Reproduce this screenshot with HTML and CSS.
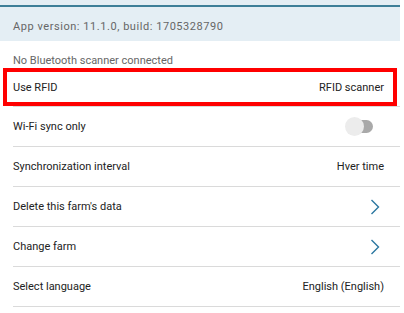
FILE: index.html
```html
<!DOCTYPE html>
<html lang="en">
<head>
  <meta charset="UTF-8" />
  <meta name="viewport" content="width=device-width, initial-scale=1.0"/>
  <title>Settings</title>
  <link rel="stylesheet" href="styles.css">
</head>
<body>
  <div class="top-strip"></div>
  <div class="version-bar">App version: 11.1.0, build: 1705328790</div>
  <div class="scanner-note">No Bluetooth scanner connected</div>

  <div class="settings-list">
    <div class="setting-row highlighted">
      <span>Use RFID</span>
      <span class="value">RFID scanner</span>
    </div>
    <div class="setting-row">
      <span>Wi-Fi sync only</span>
      <span class="toggle"><span class="knob"></span></span>
    </div>
    <div class="setting-row">
      <span>Synchronization interval</span>
      <span class="value">Hver time</span>
    </div>
    <div class="setting-row">
      <span>Delete this farm's data</span>
      <svg class="chevron" width="10" height="16" viewBox="0 0 10 16"><path d="M1.5 1 L8.5 8 L1.5 15" fill="none" stroke="#2b77a0" stroke-width="1.4"/></svg>
    </div>
    <div class="setting-row">
      <span>Change farm</span>
      <svg class="chevron" width="10" height="16" viewBox="0 0 10 16"><path d="M1.5 1 L8.5 8 L1.5 15" fill="none" stroke="#2b77a0" stroke-width="1.4"/></svg>
    </div>
    <div class="setting-row">
      <span>Select language</span>
      <span class="value">English (English)</span>
    </div>
  </div>
</body>
</html>
```

FILE: styles.css
```css
body {
  margin: 0;
  font-family: Roboto, 'Liberation Sans', sans-serif;
  font-size: 11px;
  color: #222;
  background: #fff;
}
.top-strip {
  width: 400px;
  height: 5px;
  background: #e4eef4;
  border-bottom: 2px solid #3d7f98;
}
.version-bar {
  width: 400px;
  height: 34px;
  box-sizing: border-box;
  padding: 13px 13px 0;
  background: #e4eef4;
  color: #666;
  letter-spacing: 0.55px;
}
.scanner-note {
  height: 27px;
  box-sizing: border-box;
  padding: 13px 13px 0;
  color: #666;
}
.settings-list {
  width: 400px;
}
.setting-row {
  height: 40px;
  box-sizing: border-box;
  margin-left: 13px;
  padding-right: 16px;
  border-bottom: 1px solid #dadada;
  display: flex;
  align-items: center;
  justify-content: space-between;
}
.setting-row.highlighted {
  margin-left: 3px;
  margin-right: 3px;
  height: 38px;
  padding-left: 6px;
  padding-right: 9px;
  border: 4px solid #f00;
}
.setting-row.highlighted + .setting-row {
  border-top: 1px solid #dadada;
  height: 41px;
}
.value {
  color: #222;
}
.toggle {
  position: relative;
  width: 20px;
  height: 13px;
  margin-right: 11px;
  background: #a9a9a9;
  border-radius: 7px;
}
.knob {
  position: absolute;
  left: -8px;
  top: -3px;
  width: 19px;
  height: 19px;
  border-radius: 50%;
  background: #ececec;
}
.chevron {
  margin-right: 4px;
}
```
